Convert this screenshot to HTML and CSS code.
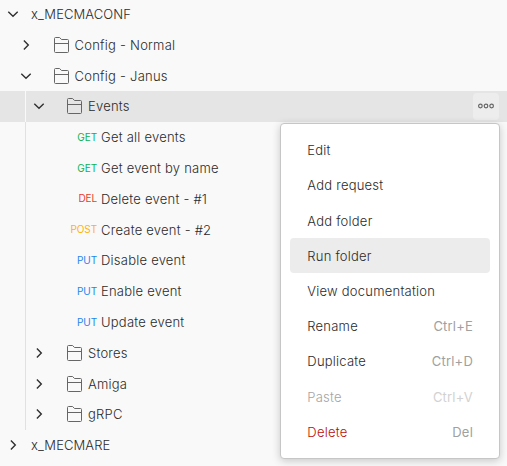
FILE: index.html
```html
<!DOCTYPE html>
<html lang="en">
<head>
<meta charset="utf-8">
<title>Collections</title>
<link rel="stylesheet" href="styles.css">
</head>
<body>
<svg class="defs" width="0" height="0">
  <symbol id="down" viewBox="0 0 12 12"><path d="M1.300 3.700 6 8.200l4.700-4.500"/></symbol>
  <symbol id="right" viewBox="0 0 12 12"><path d="M3.900 1.500 8.300 6l-4.400 4.500"/></symbol>
  <symbol id="folder" viewBox="0 0 16 16"><path d="M.5 14.500V1.500Q.5.500 1.500.500H5.600L7.500 2.500H13.500Q14.500 2.500 14.500 3.500V14.500Q14.500 15.500 13.500 15.500H1.500Q.5 15.500.5 14.500ZM.5 6.500H14.500"/></symbol>
</svg>
<nav class="tree">
  <div class="row root"><svg class="chevron"><use href="#down"/></svg><span>x_MECMACONF</span></div>
  <div class="row level1"><svg class="chevron"><use href="#right"/></svg><svg class="folder"><use href="#folder"/></svg><span>Config - Normal</span></div>
  <div class="row level1"><svg class="chevron"><use href="#down"/></svg><svg class="folder"><use href="#folder"/></svg><span>Config - Janus</span></div>
  <div class="children">
    <div class="row level2 selected"><svg class="chevron"><use href="#down"/></svg><svg class="folder"><use href="#folder"/></svg><span>Events</span>
      <button class="more" aria-label="More actions"><svg width="18" height="8" viewBox="0 0 18 8"><circle cx="3.400" cy="4" r="1.800"/><circle cx="9" cy="4" r="1.800"/><circle cx="14.600" cy="4" r="1.800"/></svg></button></div>
    <div class="row request"><b class="method get">GET</b><span>Get all events</span></div>
    <div class="row request"><b class="method get">GET</b><span>Get event by name</span></div>
    <div class="row request"><b class="method del">DEL</b><span>Delete event - #1</span></div>
    <div class="row request"><b class="method post">POST</b><span>Create event - #2</span></div>
    <div class="row request"><b class="method put">PUT</b><span>Disable event</span></div>
    <div class="row request"><b class="method put">PUT</b><span>Enable event</span></div>
    <div class="row request"><b class="method put">PUT</b><span>Update event</span></div>
    <div class="row level2"><svg class="chevron"><use href="#right"/></svg><svg class="folder"><use href="#folder"/></svg><span>Stores</span></div>
    <div class="row level2"><svg class="chevron"><use href="#right"/></svg><svg class="folder"><use href="#folder"/></svg><span>Amiga</span></div>
    <div class="row level2"><svg class="chevron"><use href="#right"/></svg><svg class="folder"><use href="#folder"/></svg><span>gRPC</span></div>
  </div>
  <div class="row root"><svg class="chevron"><use href="#right"/></svg><span>x_MECMARE</span></div>
</nav>
<div class="menu">
  <div class="item"><span>Edit</span></div>
  <div class="item"><span>Add request</span></div>
  <div class="item"><span>Add folder</span></div>
  <div class="item hover"><span>Run folder</span></div>
  <div class="item"><span>View documentation</span></div>
  <div class="item"><span>Rename</span><kbd>Ctrl+E</kbd></div>
  <div class="item"><span>Duplicate</span><kbd>Ctrl+D</kbd></div>
  <div class="item disabled"><span>Paste</span><kbd>Ctrl+V</kbd></div>
  <div class="item danger"><span>Delete</span><kbd>Del</kbd></div>
</div>
</body>
</html>
```
FILE: styles.css
```css
* { box-sizing: border-box; }
body {
  margin: 0;
  height: 466px;
  overflow: hidden;
  position: relative;
  background: #f9f9f9;
  color: #2b2b2b;
  font: 300 13px/20px Inter, sans-serif;
  letter-spacing: .23px;
}
.defs { position: absolute; }
.tree { margin-top: -1.300px; }
.row { display: flex; align-items: center; height: 30.800px; }
.root { padding-left: 7px; }
.root span { letter-spacing: .09px; }
.level1 { padding-left: 20px; }
.level2 { padding-left: 33.400px; }
.chevron { width: 12px; height: 12px; fill: none; stroke: #303030; stroke-width: 1.400; flex: none; }
.root .chevron { margin-right: 12px; }
.folder { width: 16px; height: 16px; margin: 0 5px 0 21.600px; fill: none; stroke: #666; stroke-width: 1; flex: none; }
.children { position: relative; }
.children::before {
  content: "";
  position: absolute;
  left: 25px;
  top: 0;
  bottom: 0;
  width: 1px;
  background: #e1e1e1;
}
.selected { background: linear-gradient(90deg, #e5e5e5 25px, #f9f9f9 25px, #f9f9f9 26px, #e5e5e5 26px); position: relative; }
.more {
  display: grid;
  place-items: center;
  width: 26px;
  height: 27px;
  margin: 0 8px 0 auto;
  padding: 0;
  border: 0;
  border-radius: 4px;
  background: #ededed;
}
.more svg { fill: none; stroke: #666; stroke-width: 1.200; }
.method { width: 97px; margin: -1px 4px 0 0; text-align: right; font-weight: 400; font-size: 10px; letter-spacing: -.1px; }
.get { color: #0cb350; }
.del { color: #e8392f; }
.post { color: #ffb400; }
.put { color: #1f85ee; }
.menu {
  position: absolute;
  left: 280px;
  top: 123px;
  width: 220px;
  height: 336px;
  padding: 8.600px 9px;
  border: 1px solid #c6c6c6;
  border-radius: 4px;
  background: #fff;
  box-shadow: 0 2px 9px rgba(0, 0, 0, .2);
}
.item { display: flex; align-items: center; justify-content: space-between; height: 35.200px; padding: 0 17px 0 17.300px; border-radius: 4px; }
.hover { background: #ececec; }
kbd { font: inherit; font-weight: 400; letter-spacing: .2px; color: #a0a0a0; }
.disabled { color: #a4a4a4; }
.disabled kbd { color: #d2d2d2; }
.danger > span { color: #b80d08; }
```
